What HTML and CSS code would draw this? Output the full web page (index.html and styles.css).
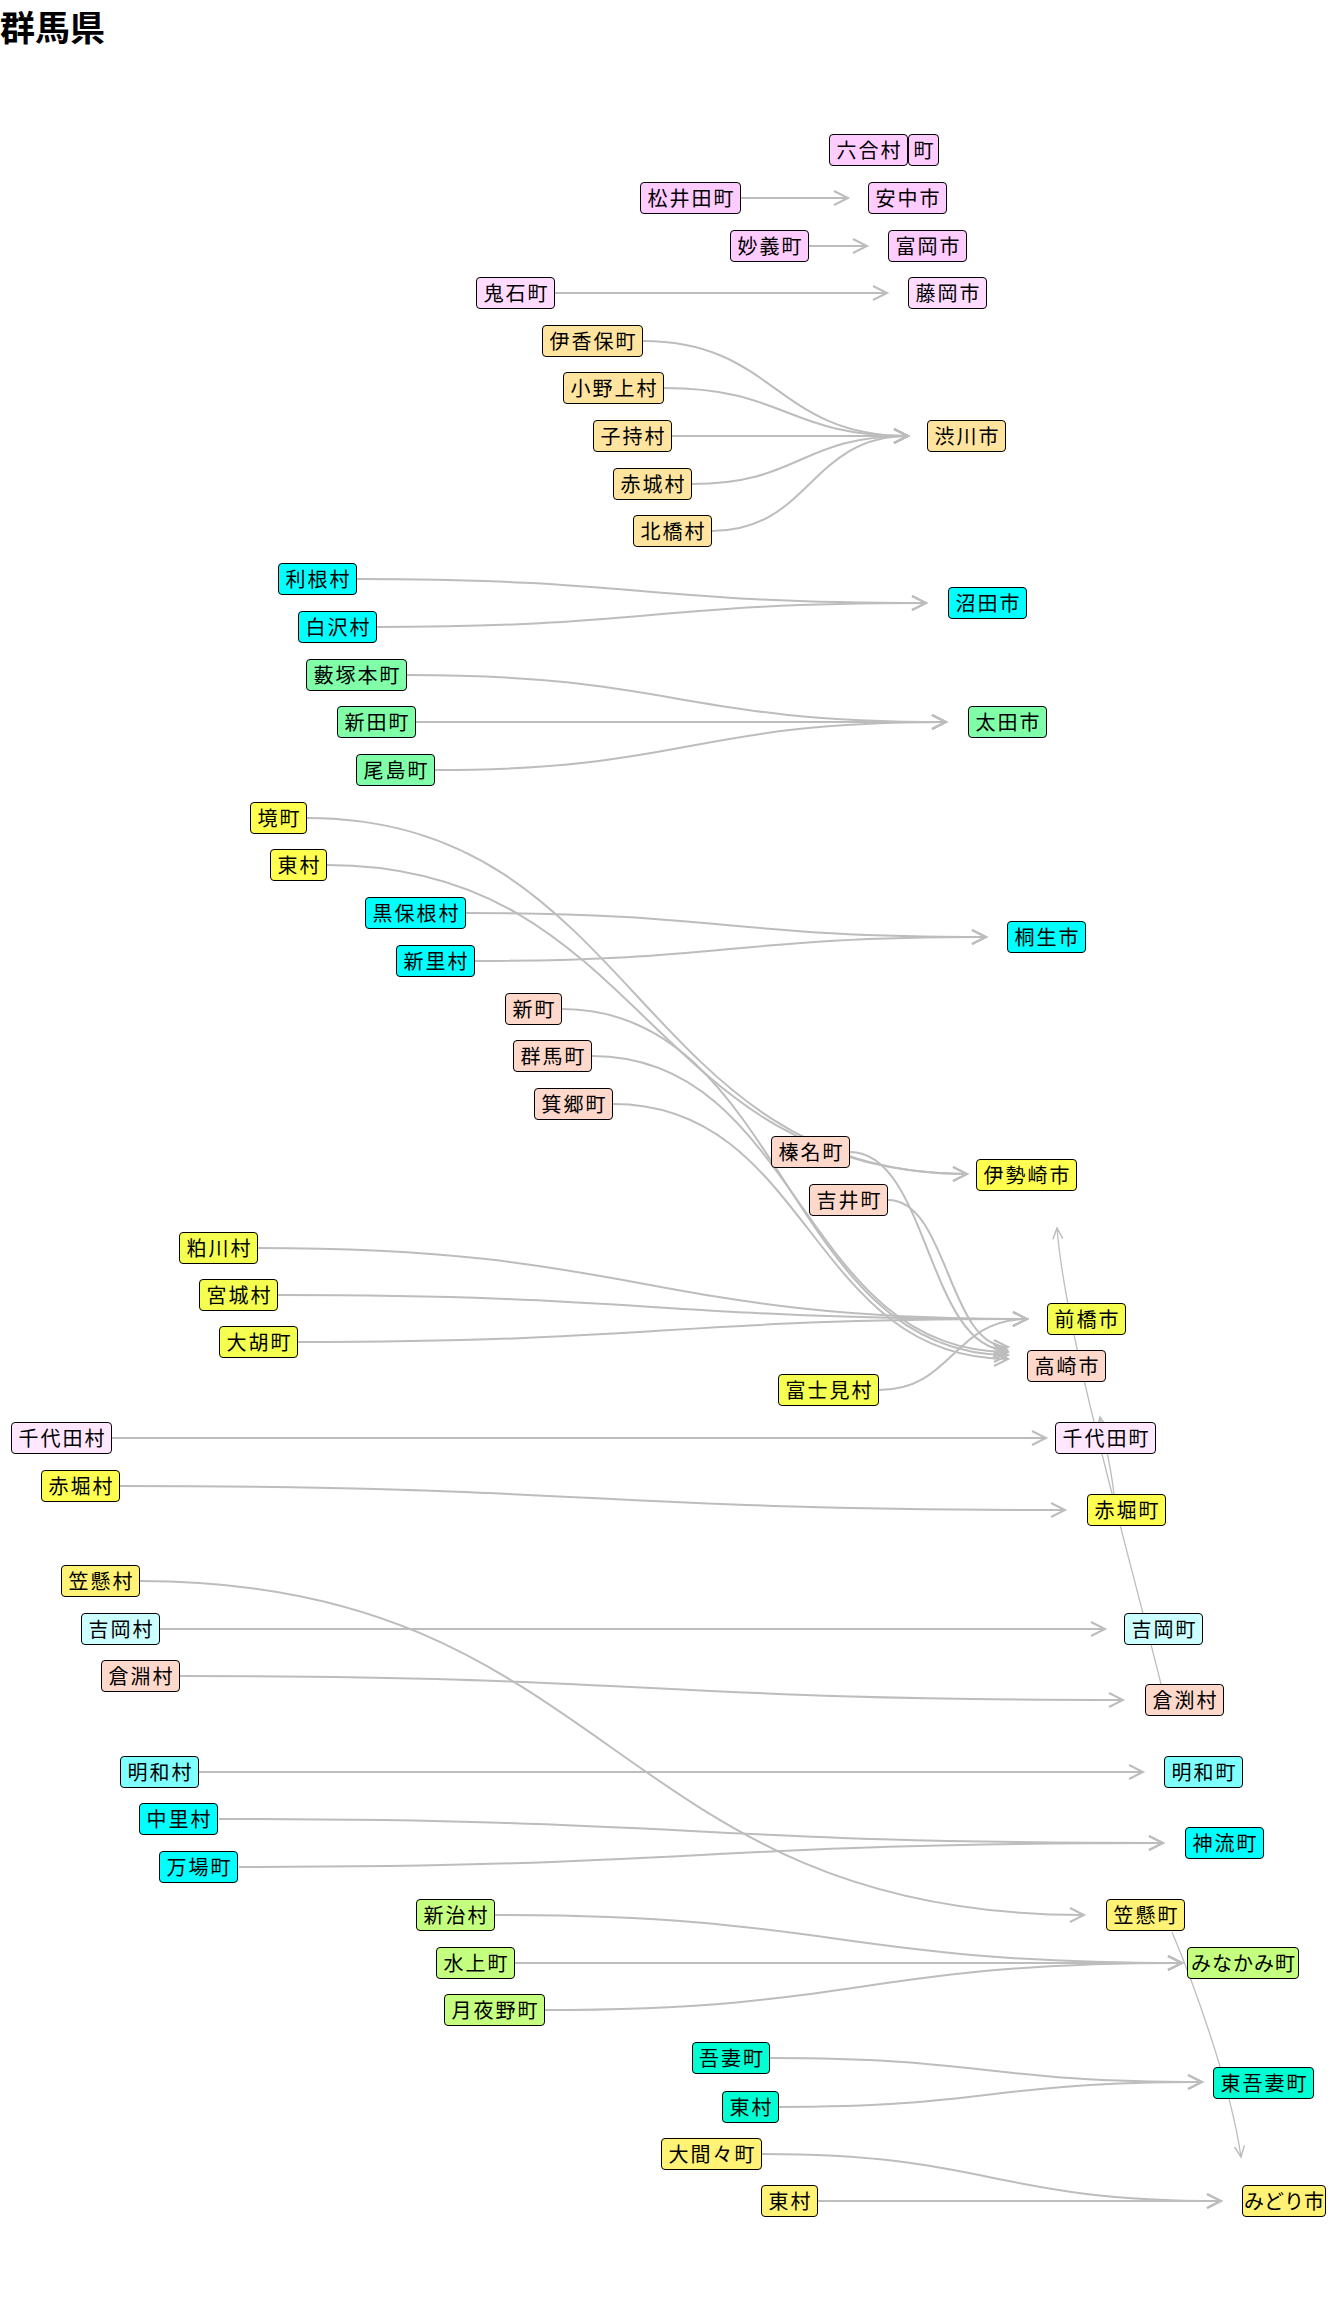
FILE: index.html
```html
<!DOCTYPE html>
<html lang="ja">
<head>
<meta charset="utf-8">
<title>群馬県</title>
<link rel="stylesheet" href="styles.css">
</head>
<body>
<h1 class="title">群馬県</h1>
<div class="canvas">
  <svg class="edges" width="1344" height="2244" viewBox="0 0 1344 2244" xmlns="http://www.w3.org/2000/svg">
    <defs>
      <marker id="ah" markerUnits="userSpaceOnUse" markerWidth="20" markerHeight="20" refX="15" refY="8" orient="auto">
        <path d="M1,1 L15,8 L1,15" fill="none" stroke="#bdbdbd" stroke-width="2"/>
      </marker>
      <marker id="ahs" markerUnits="userSpaceOnUse" markerWidth="16" markerHeight="16" refX="12" refY="6" orient="auto">
        <path d="M1,1 L12,6 L1,11" fill="none" stroke="#bdbdbd" stroke-width="1.5"/>
      </marker>
    </defs>
    <g class="edge">
      <path d="M741,138 L848,138"/>
      <path d="M809,186 L867,186"/>
      <path d="M555,233 L887,233"/>
      <path d="M643,281 C775,281 775,376 908,376"/>
      <path d="M664,328 C786,328 786,376 908,376"/>
      <path d="M672,376 L908,376"/>
      <path d="M692,424 C800,424 800,376 908,376"/>
      <path d="M712,471 C810,471 810,376 908,376"/>
      <path d="M357,519 C641,519 641,543 926,543"/>
      <path d="M377,567 C651,567 651,543 926,543"/>
      <path d="M407,615 C676,615 676,662 946,662"/>
      <path d="M416,662 L946,662"/>
      <path d="M435,710 C690,710 690,662 946,662"/>
      <path d="M307,758 C637,758 637,1114 967,1114"/>
      <path d="M327,805 C647,805 647,1114 967,1114"/>
      <path d="M466,853 C726,853 726,877 986,877"/>
      <path d="M475,901 C730,901 730,877 986,877"/>
      <path d="M562,949 C785,949 785,1295 1008,1295"/>
      <path d="M592,996 C800,996 800,1292 1008,1292"/>
      <path d="M613,1044 C810,1044 810,1299 1008,1299"/>
      <path d="M850,1092 C928,1092 928,1290 1007,1290"/>
      <path d="M888,1140 C948,1140 948,1287 1008,1287"/>
      <path d="M258,1188 C642,1188 642,1259 1027,1259"/>
      <path d="M278,1235 C652,1235 652,1259 1027,1259"/>
      <path d="M298,1282 C662,1282 662,1259 1027,1259"/>
      <path d="M879,1330 C953,1330 953,1259 1027,1259"/>
      <path d="M112,1378 L1046,1378"/>
      <path d="M120,1426 C592,1426 592,1450 1065,1450"/>
      <path d="M140,1521 C612,1521 612,1855 1084,1855"/>
      <path d="M160,1569 L1105,1569"/>
      <path d="M180,1616 C651,1616 651,1640 1123,1640"/>
      <path d="M199,1712 L1143,1712"/>
      <path d="M219,1759 C691,1759 691,1783 1163,1783"/>
      <path d="M239,1807 C701,1807 701,1783 1163,1783"/>
      <path d="M495,1855 C838,1855 838,1903 1182,1903"/>
      <path d="M515,1903 L1182,1903"/>
      <path d="M545,1950 C863,1950 863,1903 1182,1903"/>
      <path d="M770,1998 C986,1998 986,2022 1202,2022"/>
      <path d="M779,2047 C990,2047 990,2022 1202,2022"/>
      <path d="M762,2094 C991,2094 991,2141 1221,2141"/>
      <path d="M818,2141 L1221,2141"/>
    </g>
    <g class="edge thin">
      <path d="M1161,1624 C1120,1460 1065,1270 1057,1168"/>
      <path d="M1114,1434 C1110,1400 1104,1380 1100,1357"/>
      <path d="M1172,1872 C1190,1915 1230,2020 1241,2097"/>
    </g>
  </svg>

  <div class="node pink" style="left:829px;top:74px;width:79px">六合村</div>
  <div class="node pink" style="left:908px;top:74px;width:31px">町</div>
  <div class="node pink" style="left:640px;top:122px;width:101px">松井田町</div>
  <div class="node pink" style="left:868px;top:122px;width:79px">安中市</div>
  <div class="node pink" style="left:730px;top:170px;width:79px">妙義町</div>
  <div class="node pink" style="left:888px;top:170px;width:79px">富岡市</div>
  <div class="node pink-l" style="left:476px;top:217px;width:79px">鬼石町</div>
  <div class="node pink-l" style="left:908px;top:217px;width:79px">藤岡市</div>

  <div class="node sand" style="left:542px;top:265px;width:101px">伊香保町</div>
  <div class="node sand" style="left:563px;top:312px;width:101px">小野上村</div>
  <div class="node sand" style="left:593px;top:360px;width:79px">子持村</div>
  <div class="node sand" style="left:927px;top:360px;width:79px">渋川市</div>
  <div class="node sand" style="left:613px;top:408px;width:79px">赤城村</div>
  <div class="node sand" style="left:633px;top:455px;width:79px">北橋村</div>

  <div class="node cyan" style="left:278px;top:503px;width:79px">利根村</div>
  <div class="node cyan" style="left:948px;top:527px;width:79px">沼田市</div>
  <div class="node cyan" style="left:298px;top:551px;width:79px">白沢村</div>

  <div class="node mint" style="left:306px;top:599px;width:101px">藪塚本町</div>
  <div class="node mint" style="left:337px;top:646px;width:79px">新田町</div>
  <div class="node mint" style="left:968px;top:646px;width:79px">太田市</div>
  <div class="node mint" style="left:356px;top:694px;width:79px">尾島町</div>

  <div class="node yellow" style="left:250px;top:742px;width:57px">境町</div>
  <div class="node yellow" style="left:270px;top:789px;width:57px">東村</div>
  <div class="node cyan" style="left:365px;top:837px;width:101px">黒保根村</div>
  <div class="node cyan" style="left:1007px;top:861px;width:79px">桐生市</div>
  <div class="node cyan" style="left:396px;top:885px;width:79px">新里村</div>

  <div class="node salmon" style="left:505px;top:933px;width:57px">新町</div>
  <div class="node salmon" style="left:513px;top:980px;width:79px">群馬町</div>
  <div class="node salmon" style="left:534px;top:1028px;width:79px">箕郷町</div>
  <div class="node salmon" style="left:771px;top:1076px;width:79px">榛名町</div>
  <div class="node yellow" style="left:976px;top:1099px;width:101px">伊勢崎市</div>
  <div class="node salmon" style="left:809px;top:1124px;width:79px">吉井町</div>

  <div class="node lime-y" style="left:179px;top:1172px;width:79px">粕川村</div>
  <div class="node lime-y" style="left:199px;top:1219px;width:79px">宮城村</div>
  <div class="node lime-y" style="left:1047px;top:1243px;width:79px">前橋市</div>
  <div class="node lime-y" style="left:219px;top:1266px;width:79px">大胡町</div>
  <div class="node salmon" style="left:1027px;top:1290px;width:79px">高崎市</div>
  <div class="node lime-y" style="left:778px;top:1314px;width:101px">富士見村</div>

  <div class="node lilac" style="left:11px;top:1362px;width:101px">千代田村</div>
  <div class="node lilac" style="left:1055px;top:1362px;width:101px">千代田町</div>
  <div class="node yellow" style="left:41px;top:1410px;width:79px">赤堀村</div>
  <div class="node yellow" style="left:1087px;top:1434px;width:79px">赤堀町</div>

  <div class="node butter" style="left:61px;top:1505px;width:79px">笠懸村</div>
  <div class="node ice" style="left:81px;top:1553px;width:79px">吉岡村</div>
  <div class="node ice" style="left:1124px;top:1553px;width:79px">吉岡町</div>
  <div class="node salmon" style="left:101px;top:1600px;width:79px">倉淵村</div>
  <div class="node salmon" style="left:1145px;top:1624px;width:79px">倉渕村</div>

  <div class="node aqua" style="left:120px;top:1696px;width:79px">明和村</div>
  <div class="node aqua" style="left:1164px;top:1696px;width:79px">明和町</div>
  <div class="node cyan" style="left:139px;top:1743px;width:79px">中里村</div>
  <div class="node cyan" style="left:1185px;top:1767px;width:79px">神流町</div>
  <div class="node cyan" style="left:159px;top:1791px;width:79px">万場町</div>

  <div class="node green" style="left:416px;top:1839px;width:79px">新治村</div>
  <div class="node butter" style="left:1106px;top:1839px;width:79px">笠懸町</div>
  <div class="node green" style="left:436px;top:1887px;width:79px">水上町</div>
  <div class="node green tight" style="left:1187px;top:1887px;width:112px">みなかみ町</div>
  <div class="node green" style="left:444px;top:1934px;width:101px">月夜野町</div>

  <div class="node teal" style="left:692px;top:1982px;width:78px">吾妻町</div>
  <div class="node teal" style="left:1213px;top:2007px;width:101px">東吾妻町</div>
  <div class="node teal" style="left:722px;top:2031px;width:57px">東村</div>

  <div class="node butter" style="left:661px;top:2078px;width:101px">大間々町</div>
  <div class="node butter" style="left:761px;top:2125px;width:57px">東村</div>
  <div class="node butter tighter" style="left:1242px;top:2125px;width:84px">みどり市</div>
</div>
</body>
</html>
```

FILE: styles.css
```css
html, body {
  margin: 0;
  padding: 0;
  background: #ffffff;
}

body {
  font-family: "Noto Sans CJK JP", "Noto Sans", sans-serif;
  color: #000000;
}

.title {
  margin: 0;
  height: 60px;
  font-size: 35px;
  line-height: 52px;
  font-weight: 700;
  padding: 0;
}

.canvas {
  position: relative;
  width: 1344px;
  height: 2244px;
}

.edges {
  position: absolute;
  top: 0;
  left: 0;
}

.edge path {
  fill: none;
  stroke: #bdbdbd;
  stroke-width: 2;
  marker-end: url(#ah);
}

.edge.thin path {
  stroke-width: 1.3;
  marker-end: url(#ahs);
}

.node {
  position: absolute;
  box-sizing: border-box;
  height: 32px;
  border: 1px solid #000000;
  border-radius: 4px;
  font-size: 20px;
  line-height: 30px;
  letter-spacing: 2px;
  padding-left: 2px;
  text-align: center;
  white-space: nowrap;
  overflow: hidden;
}

.node.tight {
  letter-spacing: 1px;
  padding-left: 1px;
}

.node.tighter {
  letter-spacing: 0;
  padding-left: 0;
}

.pink { background: #ffccff; }
.pink-l { background: #ffdcff; }
.sand { background: #ffe4a0; }
.cyan { background: #00ffff; }
.mint { background: #80ffa8; }
.yellow { background: #ffff50; }
.lime-y { background: #f4ff50; }
.salmon { background: #ffd8cc; }
.lilac { background: #ffe8ff; }
.butter { background: #fff275; }
.ice { background: #ccffff; }
.aqua { background: #80ffff; }
.green { background: #c4ff80; }
.teal { background: #00ffd2; }
```
